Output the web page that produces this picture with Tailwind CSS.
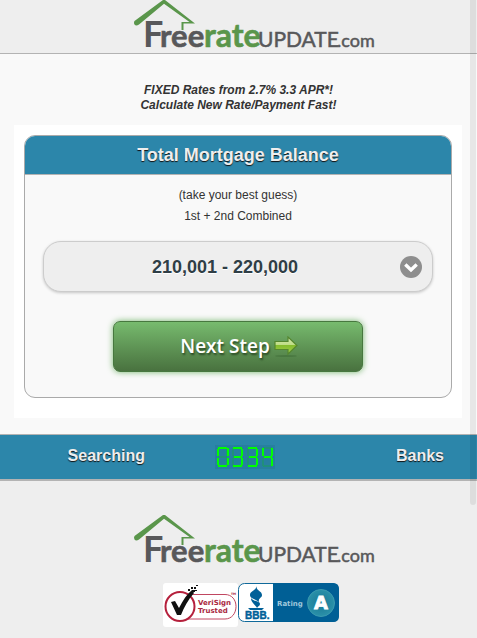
<!DOCTYPE html>
<html lang="en">
<head>
<meta charset="utf-8">
<meta name="viewport" content="width=device-width, initial-scale=1">
<title>Free Rate Update</title>
<script src="https://cdn.jsdelivr.net/npm/@tailwindcss/browser@4"></script>
</head>
<body class="relative overflow-hidden bg-[#eeeeee] font-['Liberation_Sans',Arial,sans-serif] text-[#333333]">
<svg class="hidden" aria-hidden="true">
  <symbol id="logo" viewBox="0 0 272 53">
    <path d="M31.500 21 L60 0 H62 L92 23.500 H80.500 V30 H78.500 V22 H86.500 L61 3.800 L36 24.500 Q33 26.500 31.500 24.500 Q30.500 22.500 31.500 21Z" fill="#5a964b"/>
    <g font-family="Lato, sans-serif" fill="#58585a">
      <text x="40" y="47" font-size="36" font-weight="700">F</text>
      <text x="57" y="47" font-size="31" font-weight="700" stroke="#58585a" stroke-width=".6">ree</text>
      <text x="101" y="47" font-size="32" font-weight="700" fill="#5a964b" stroke="#5a964b" stroke-width=".6">rate</text>
      <text x="155" y="47" font-size="21" stroke="#58585a" stroke-width=".5">UPDATE</text>
      <text x="234" y="47" font-size="18" stroke="#58585a" stroke-width=".5">.com</text>
    </g>
  </symbol>
</svg>

<header class="flex justify-center border-b border-[#b3b3b3]">
  <svg class="h-[53px] w-[272px]" role="img" aria-label="FreeRateUpdate.com"><use href="#logo"/></svg>
</header>

<main class="bg-[#f9f9f9] px-[14px] pt-[29px] pb-4">
  <h1 class="text-center text-[12px] leading-[15px] font-bold italic">FIXED Rates from 2.7% 3.3 APR*!<br>Calculate New Rate/Payment Fast!</h1>
  <form class="mt-3 mr-[1px] bg-white px-[10px] pt-[10px] pb-5">
    <section class="overflow-hidden rounded-[11px] border border-[#aaaaaa] bg-[#f9f9f9]">
      <h2 class="border-b border-[#b3b3b3] bg-[#2c86aa] text-center text-[18px] leading-[38px] font-bold text-[#eeeeee] [text-shadow:0_1px_1px_#111]">Total Mortgage Balance</h2>
      <div class="px-[18px] pt-[10px] pb-[25px] text-center">
        <label for="balance" class="block text-[12px] leading-[21px]">(take your best guess)<br>1st + 2nd Combined</label>
        <div class="relative mt-[14px]">
          <select id="balance" class="block h-[51px] w-full appearance-none rounded-[18px] border border-[#cccccc] bg-[#eeeeee] pt-[2px] pr-[40px] pl-[14px] text-center text-[18px] font-bold text-[#2f3e46] shadow-[0_1px_3px_rgba(0,0,0,0.2)] [text-align-last:center] [text-shadow:0_1px_0_#fff]">
            <option>210,001 - 220,000</option>
          </select>
          <svg class="pointer-events-none absolute top-[15px] right-[11px] size-[22px]" viewBox="0 0 22 22" aria-hidden="true"><circle cx="11" cy="11" r="11" fill="#8e8e8e"/><path d="M5.300 8.500 11 14 16.700 8.500" fill="none" stroke="#fff" stroke-width="3.400"/></svg>
        </div>
        <button type="button" class="mx-auto mt-[29px] flex h-[51px] w-[250px] items-center justify-center gap-1 rounded-[7px] border border-[#47783f] bg-linear-to-b from-[#77bb6e] to-[#49723f] pl-[2px] font-['Open_Sans','Noto_Sans',sans-serif] text-[19px] font-semibold text-white shadow-[0_0_6px_#72b56a] [text-shadow:1px_2px_2px_#2b4a25]">Next Step
          <svg class="h-[22px] w-[24px]" viewBox="0 0 24 22" aria-hidden="true"><defs><linearGradient id="arrow" x2="0" y2="1"><stop offset="0" stop-color="#d9ebb4"/><stop offset=".48" stop-color="#bddc83"/><stop offset=".5" stop-color="#86bd2d"/><stop offset="1" stop-color="#a0cd50"/></linearGradient></defs><ellipse cx="12" cy="20" rx="11" ry="1" fill="#315c2b" opacity=".35"/><path d="M1 5.500H14V1L23 9.500 14 18V13.500H1Z" fill="url(#arrow)" stroke="#55872f" stroke-width="1.200"/></svg>
        </button>
      </div>
    </section>
  </form>
</main>

<section class="grid h-[47px] grid-cols-[1fr_60px_1fr] items-center border-t border-b-2 border-[#b3b3b3] bg-[#2c86aa] text-[16px] font-bold text-[#eeeeee]">
  <span class="pb-[2px] pl-1 text-center [text-shadow:0_1px_1px_#111]">Searching</span>
  <svg class="ml-[6px] h-[24px] w-[60px] overflow-visible" viewBox="0 0 60 24" role="img" aria-label="0334">
    <rect width="60" height="24" fill="#277fa0"/>
    <defs><g id="segments" fill="none" stroke-width="2"><path d="M3 3H12M3 12H12M3 21H12M3 3V11M3 13V21M12 3V11M12 13V21"/></g></defs>
    <g stroke="#208f7b"><use href="#segments"/><use href="#segments" x="15"/><use href="#segments" x="30"/><use href="#segments" x="45"/></g>
    <g fill="none" stroke="#00ff00" stroke-width="2">
      <path d="M3 3H12M3 21H12M3 4V11M3 13V20M13 3V11M13 13V20"/>
      <path d="M18 3H27M19 12H27M18 21H27M27 4V11M27 13V20"/>
      <path d="M33 3H42M34 12H42M33 21H42M42 4V11M42 13V20"/>
      <path d="M48 3V11M49 12H57M57 3V11M57 13V21"/>
    </g>
  </svg>
  <span class="pr-[33px] pb-[2px] text-right [text-shadow:0_1px_1px_#111]">Banks</span>
</section>

<footer class="pt-[34px] pb-3">
  <svg class="mx-auto h-[53px] w-[272px]" role="img" aria-label="FreeRateUpdate.com"><use href="#logo"/></svg>
  <div class="mt-[15px] flex items-start justify-center pl-[25px]">
    <svg class="h-[44px] w-[75px]" viewBox="0 0 75 44" role="img" aria-label="VeriSign Trusted">
      <rect width="75" height="44" rx="3" fill="#fff"/>
      <path d="M25 11.500H62C69 11.500 73 17 73 23.500S69 36 62 36H25" fill="none" stroke="#c04660" stroke-width="1"/>
      <circle cx="17" cy="23.500" r="14.500" fill="#fff" stroke="#b5203c" stroke-width="2"/>
      <path d="M8 19 12 18 16 25C20 17 24 11 29 7L31 10C25 17 21 24 18 32H14Z" fill="#111"/>
      <path d="M25 6h2v2h-2zm3-2h2v2h-2zm3 0h2v2h-2zm-2 3h3v2h-3zm4-5h2v1h-2zm-1 5h2v1h-2zm-6 3h3v2h-3z" fill="#111"/>
      <g font-family="DejaVu Sans, sans-serif" font-size="7" font-weight="700" fill="#a92740"><text x="35" y="22">VeriSign</text><text x="35" y="30">Trusted</text><text x="68" y="12" font-size="3">TM</text></g>
    </svg>
    <svg class="h-[39px] w-[101px]" viewBox="0 0 101 39" role="img" aria-label="BBB Rating A">
      <defs><radialGradient id="seal"><stop stop-color="#1a7895"/><stop offset="1" stop-color="#2a91a9"/></radialGradient></defs>
      <rect x=".5" y=".5" width="100" height="38" rx="6" fill="#fff" stroke="#10699a"/>
      <path d="M35 0H95Q101 0 101 6V33Q101 39 95 39H35Z" fill="#005f95"/>
      <path d="M18.500 3C18 8 24 8 24 12C24 15 20 15 21 19C18 16 12 16 12 12C12 8 18 8 18.500 3ZM13 15C16 19 22 18 22 21C22 23 20 23 19 25C18 22 13 20 13 15ZM10 25H26L24 27H12Z" fill="#006098"/>
      <text x="7" y="36" font-family="Liberation Sans, sans-serif" font-size="10" font-weight="700" fill="#006098" stroke="#006098" stroke-width=".4">BBB.</text>
      <text x="39" y="23" font-family="DejaVu Sans, sans-serif" font-size="7" font-weight="700" fill="#9fc8dc">Rating</text>
      <circle cx="83" cy="20" r="13.500" fill="url(#seal)" stroke="#3b9aaf"/>
      <text x="83" y="26" text-anchor="middle" font-family="DejaVu Sans, sans-serif" font-size="18" font-weight="700" fill="#fff" stroke="#fff" stroke-width=".8">A</text>
    </svg>
  </div>
</footer>
<div class="absolute top-0 right-[1px] h-[505px] w-[6px] rounded-b-full bg-black/[0.07]" aria-hidden="true"></div>
</body>
</html>
